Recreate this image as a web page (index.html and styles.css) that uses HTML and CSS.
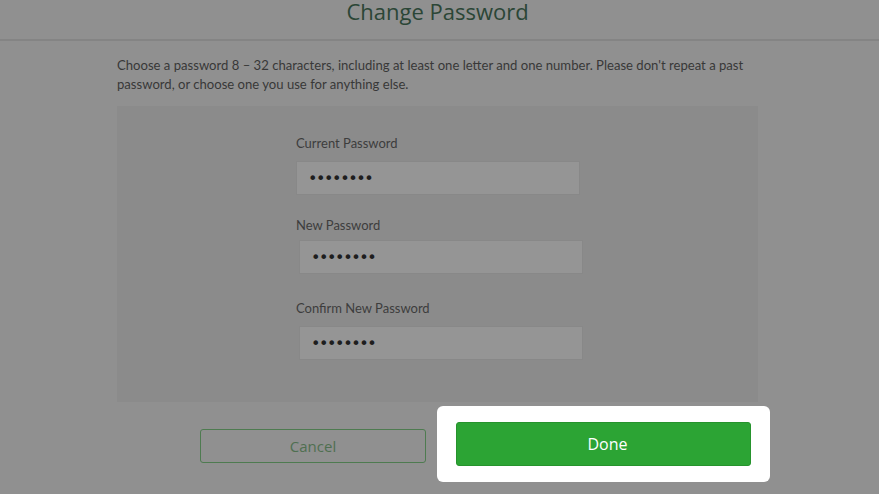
FILE: index.html
```html
<!DOCTYPE html>
<html lang="en">
<head>
<meta charset="utf-8">
<title>Change Password</title>
<link rel="stylesheet" href="styles.css">
</head>
<body>
<div class="page">
  <header class="header">
    <h1 class="title">Change Password</h1>
  </header>
  <main class="main">
    <p class="desc">Choose a password 8 – 32 characters, including at least one letter and one number. Please don't repeat a past password, or choose one you use for anything else.</p>
    <section class="panel">
      <div class="form">
        <div class="field first">
          <label class="label">Current Password</label>
          <div class="input">••••••••</div>
        </div>
        <div class="field second">
          <label class="label">New Password</label>
          <div class="input">••••••••</div>
        </div>
        <div class="field third">
          <label class="label">Confirm New Password</label>
          <div class="input">••••••••</div>
        </div>
      </div>
    </section>
    <div class="actions">
      <button class="btn cancel">Cancel</button>
      <div class="spotlight">
        <button class="btn done">Done</button>
      </div>
    </div>
  </main>
</div>
</body>
</html>
```
FILE: styles.css
```css
html, body {
  margin: 0;
  padding: 0;
}
body {
  width: 879px;
  height: 494px;
  overflow: hidden;
  background: #909090;
  font-family: "Open Sans", "Noto Sans", sans-serif;
  color: #3a3a3a;
}
.page {
  display: flex;
  flex-direction: column;
  height: 494px;
}
.header {
  height: 41px;
  border-bottom: 2px solid #848484;
  display: flex;
  justify-content: center;
  box-sizing: border-box;
}
.title {
  margin: 0 0 0 -4px;
  font-weight: 400;
  font-size: 22px;
  line-height: 22px;
  color: #2b4636;
}
.main {
  padding-left: 117px;
}
.desc {
  margin: 15px 0 0 0;
  width: 640px;
  font-family: "Lato", "Open Sans", sans-serif;
  font-size: 13.1px;
  line-height: 19px;
  color: #383838;
}
.panel {
  margin-top: 12px;
  width: 641px;
  height: 296px;
  background: #8b8b8b;
  box-sizing: border-box;
  padding: 29px 0 0 179px;
}
.form {
  display: flex;
  flex-direction: column;
}
.field {
  display: flex;
  flex-direction: column;
  gap: 9px;
}
.field.second {
  margin-top: 22px;
  gap: 6px;
}
.field.third {
  margin-top: 26px;
  gap: 9px;
}
.label {
  font-family: "Lato", "Open Sans", sans-serif;
  font-size: 13px;
  line-height: 17px;
  color: #3d3d3d;
}
.input {
  width: 284px;
  height: 34px;
  box-sizing: border-box;
  border: 1px solid #888888;
  background: #959595;
  padding-left: 11px;
  display: flex;
  align-items: center;
  font-family: "DejaVu Sans", sans-serif;
  font-size: 16px;
  letter-spacing: -1.4px;
  color: #1e1e1e;
}
.field.second .input,
.field.third .input {
  margin-left: 3px;
}
.actions {
  display: flex;
  align-items: flex-start;
  margin-top: 4px;
  margin-left: 83px;
  gap: 11px;
}
.btn {
  font-family: "Open Sans", "Noto Sans", sans-serif;
  border-radius: 3px;
  cursor: pointer;
  box-sizing: border-box;
}
.cancel {
  margin-top: 23px;
  width: 226px;
  height: 34px;
  background: transparent;
  border: 1px solid #4e7b50;
  color: #4f6f50;
  font-size: 15px;
}
.spotlight {
  background: #ffffff;
  border-radius: 6px;
  padding: 16px 19px;
}
.done {
  display: block;
  width: 295px;
  height: 44px;
  padding-left: 14px;
  background: #2ca434;
  border: 1px solid #26932d;
  color: #ffffff;
  font-size: 16px;
}
```
